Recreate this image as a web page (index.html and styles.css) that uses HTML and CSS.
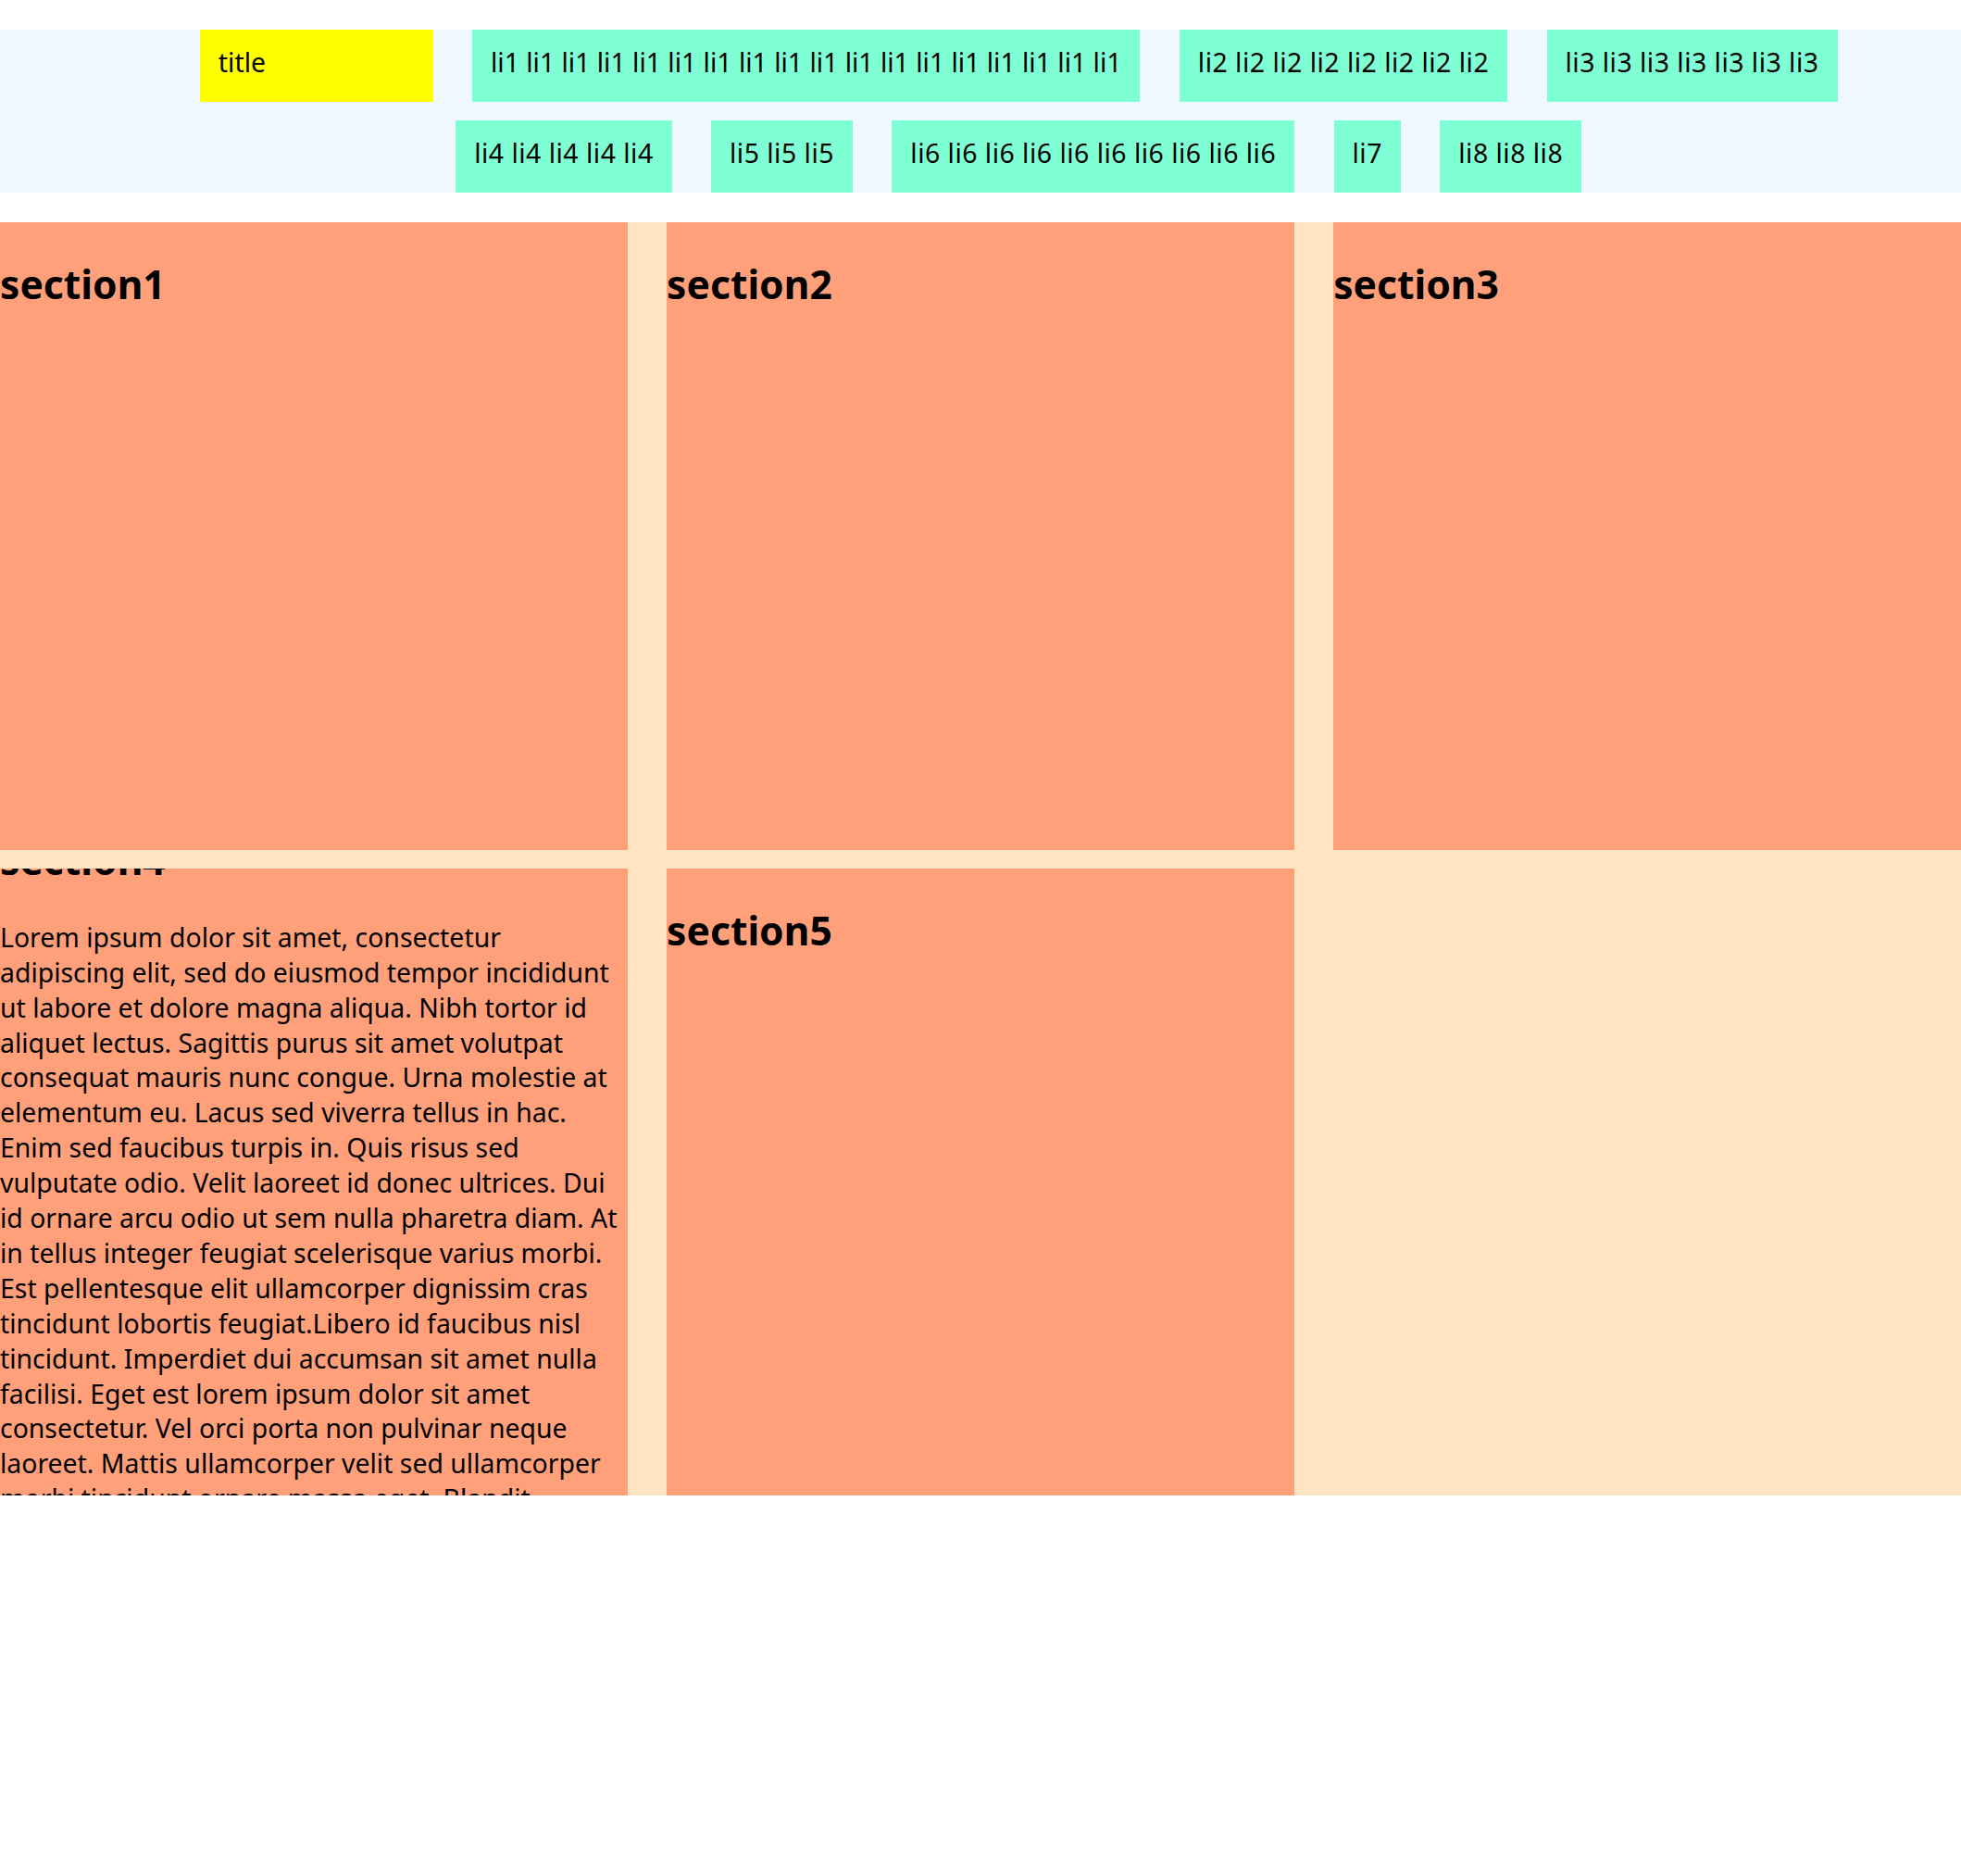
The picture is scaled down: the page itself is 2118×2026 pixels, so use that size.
FILE: index.html
```html
<!DOCTYPE html>
<html lang="ko">
<head>
<meta charset="UTF-8">
<meta name="viewport" content="width=device-width, initial-scale=1.0">
<title>grid layout</title>
<link rel="stylesheet" href="styles.css">
</head>
<body>

<header class="top">
    <ul class="menu">
        <li class="title">title</li>
        <li class="long">li1 li1 li1 li1 li1 li1 li1 li1 li1 li1 li1 li1 li1 li1 li1 li1 li1 li1</li>
        <li>li2 li2 li2 li2 li2 li2 li2 li2</li>
        <li>li3 li3 li3 li3 li3 li3 li3</li>
        <li>li4 li4 li4 li4 li4</li>
        <li>li5 li5 li5</li>
        <li>li6 li6 li6 li6 li6 li6 li6 li6 li6 li6</li>
        <li>li7</li>
        <li>li8 li8 li8</li>
    </ul>
</header>

<main class="board">
    <section class="box">
        <h2>section1</h2>
    </section>
    <section class="box">
        <h2>section2</h2>
    </section>
    <section class="box">
        <h2>section3</h2>
    </section>
    <section class="box box-text">
        <div class="box-inner">
            <h2>section4</h2>
            <p>Lorem ipsum dolor sit amet, consectetur adipiscing elit, sed do eiusmod tempor incididunt ut labore et dolore magna aliqua. Nibh tortor id aliquet lectus. Sagittis purus sit amet volutpat consequat mauris nunc congue. Urna molestie at elementum eu. Lacus sed viverra tellus in hac. Enim sed faucibus turpis in. Quis risus sed vulputate odio. Velit laoreet id donec ultrices. Dui id ornare arcu odio ut sem nulla pharetra diam. At in tellus integer feugiat scelerisque varius morbi. Est pellentesque elit ullamcorper dignissim cras tincidunt lobortis feugiat.Libero id faucibus nisl tincidunt. Imperdiet dui accumsan sit amet nulla facilisi. Eget est lorem ipsum dolor sit amet consectetur. Vel orci porta non pulvinar neque laoreet. Mattis ullamcorper velit sed ullamcorper morbi tincidunt ornare massa eget. Blandit volutpat maecenas volutpat blandit aliquam.</p>
        </div>
    </section>
    <section class="box">
        <h2>section5</h2>
    </section>
</main>

</body>
</html>
```

FILE: styles.css
```css
body {
    margin: 0;
    font-family: "Noto Sans", "Noto Sans CJK KR", sans-serif;
    font-size: 28.4px;
    line-height: 37.9px;
    color: #000;
    background-color: #fff;
}

/* header */
.top {
    margin: 32px 0;
    background-color: aliceblue;
}

.menu {
    display: flex;
    flex-wrap: wrap;
    justify-content: center;
    row-gap: 20px;
    margin: 0;
    padding: 0 0 0 40px;
    list-style: none;
}

.menu li {
    margin-left: 2vw;
    padding: 17px 20px 23px;
    letter-spacing: 0.5px;
    background-color: aquamarine;
}

.menu .title,
.menu .long {
    letter-spacing: 0;
}

.menu .title {
    width: 10vw;
    background-color: yellow;
}

/* sections */
.board {
    display: grid;
    grid-template-columns: repeat(3, 1fr);
    grid-auto-rows: 32vw;
    column-gap: 2vw;
    row-gap: 20px;
    background-color: bisque;
}

.box {
    background-color: lightsalmon;
}

.box h2 {
    margin: 37px 0;
    font-size: 1.5em;
    line-height: normal;
}

.box p {
    margin: 1em 0 15px;
}

.box-text {
    display: flex;
    flex-direction: column;
    justify-content: center;
    overflow: hidden;
}
```
